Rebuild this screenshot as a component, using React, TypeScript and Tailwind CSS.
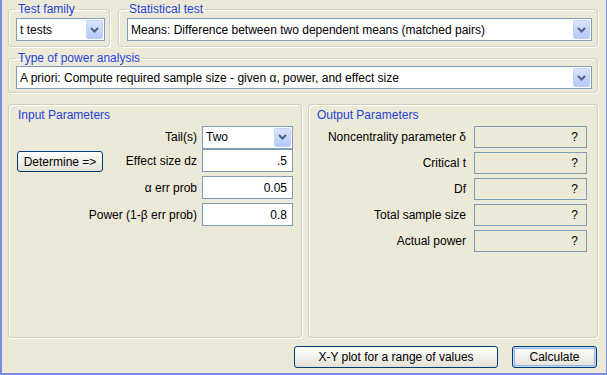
import React from "react";

function Chevron() {
  return (
    <svg width="9" height="6" viewBox="0 0 9 6">
      <path d="M1 1 L4.5 4.5 L8 1" fill="none" stroke="#4d6185" strokeWidth="2" />
    </svg>
  );
}

function Select({ value, className = "" }: { value: string; className?: string }) {
  return (
    <div className={"flex items-center bg-white border border-[#7f9db9] h-[23px] " + className}>
      <span className="flex-1 pl-[3px] truncate">{value}</span>
      <div className="w-[17px] h-[19px] mr-[1px] rounded-[2px] bg-gradient-to-b from-[#d9e4fd] to-[#b5c9f7] border border-[#c3d3fd] flex items-center justify-center">
        <Chevron />
      </div>
    </div>
  );
}

function Group({ title, className = "", children }: { title: string; className?: string; children: React.ReactNode }) {
  return (
    <fieldset className={"border border-[#d0d0bf] rounded-[4px] shadow-[inset_1px_1px_0_#ffffff,1px_1px_0_#ffffff] " + className}>
      <legend className="px-[2px] text-[#1f43d6] leading-[14px]">{title}</legend>
      {children}
    </fieldset>
  );
}

const inputs = [
  { label: "Effect size dz", value: ".5", button: true },
  { label: "α err prob", value: "0.05" },
  { label: "Power (1-β err prob)", value: "0.8" },
];

const outputs = ["Noncentrality parameter δ", "Critical t", "Df", "Total sample size", "Actual power"];

export default function App() {
  return (
    <div className="w-[607px] h-[375px] bg-[#ece9d8] border-l-2 border-b-2 border-r border-[#7b8ee6] flex flex-col pl-[6px] pr-[8px] pt-[2px] text-[12px] text-black font-['Liberation_Sans',Arial,sans-serif] whitespace-nowrap">
      {/* Top row */}
      <div className="flex gap-[8px] h-[45px]">
        <Group title="Test family" className="w-[102px] pl-[7px] pr-[4px] pt-[2px]">
          <Select value="t tests" />
        </Group>
        <Group title="Statistical test" className="flex-1 pl-[8px] pr-[5px] pt-[2px]">
          <Select value="Means: Difference between two dependent means (matched pairs)" />
        </Group>
      </div>

      <Group title="Type of power analysis" className="mt-[4px] h-[42px] pl-[7px] pr-[5px] pt-[1px]">
        <Select value="A priori: Compute required sample size - given α, power, and effect size" />
      </Group>

      {/* Parameter panels */}
      <div className="mt-[11px] h-[234px] flex gap-[6px]">
        <div className="w-[294px] border border-[#d0d0bf] rounded-[4px] shadow-[inset_1px_1px_0_#ffffff,1px_1px_0_#ffffff] pt-[3px] pl-[8px] pr-[8px]">
          <div className="text-[#1f43d6] leading-[14px] pl-[1px]">Input Parameters</div>
          <div className="mt-[4px] flex items-center h-[22px]">
            <span className="flex-1 text-right pr-[5px]">Tail(s)</span>
            <Select value="Two" className="w-[91px] h-[22px] shrink-0" />
          </div>
          <div className="mt-[1px] flex flex-col gap-[4px]">
            {inputs.map((r) => (
              <div key={r.label} className="flex items-center h-[23px]">
                <div className="w-[70px] shrink-0">
                  {r.button && (
                    <button className="w-[86px] h-[21px] mt-[2px] rounded-[3px] border border-[#003c74] bg-gradient-to-b from-[#ffffff] to-[#e3e1d6] text-center">
                      Determine =&gt;
                    </button>
                  )}
                </div>
                <span className="flex-1 min-w-0 text-right pr-[5px]">{r.label}</span>
                <div className="w-[91px] h-[23px] shrink-0 bg-white border border-[#7f9db9] flex items-center justify-end pr-[5px]">
                  {r.value}
                </div>
              </div>
            ))}
          </div>
        </div>

        <div className="flex-1 border border-[#d0d0bf] rounded-[4px] shadow-[inset_1px_1px_0_#ffffff,1px_1px_0_#ffffff] pt-[3px] pl-[8px] pr-[10px]">
          <div className="text-[#1f43d6] leading-[14px]">Output Parameters</div>
          <div className="mt-[4px] flex flex-col gap-[4px]">
            {outputs.map((o) => (
              <div key={o} className="flex items-center h-[22px]">
                <span className="flex-1 text-right pr-[8px]">{o}</span>
                <div className="w-[113px] h-[22px] shrink-0 border border-[#7f9db9] flex items-center justify-end pr-[8px]">?</div>
              </div>
            ))}
          </div>
        </div>
      </div>

      {/* Buttons */}
      <div className="mt-[8px] flex justify-end gap-[14px] pr-[1px]">
        <button className="w-[204px] h-[22px] rounded-[3px] border border-[#003c74] bg-gradient-to-b from-[#ffffff] to-[#e3e1d6]">
          X-Y plot for a range of values
        </button>
        <button className="w-[85px] h-[22px] rounded-[3px] border border-[#003c74] bg-gradient-to-b from-[#ffffff] to-[#e3e1d6] shadow-[inset_0_0_0_1px_#c0d8fc,inset_0_0_0_2px_#94b4ec]">
          Calculate
        </button>
      </div>
    </div>
  );
}
